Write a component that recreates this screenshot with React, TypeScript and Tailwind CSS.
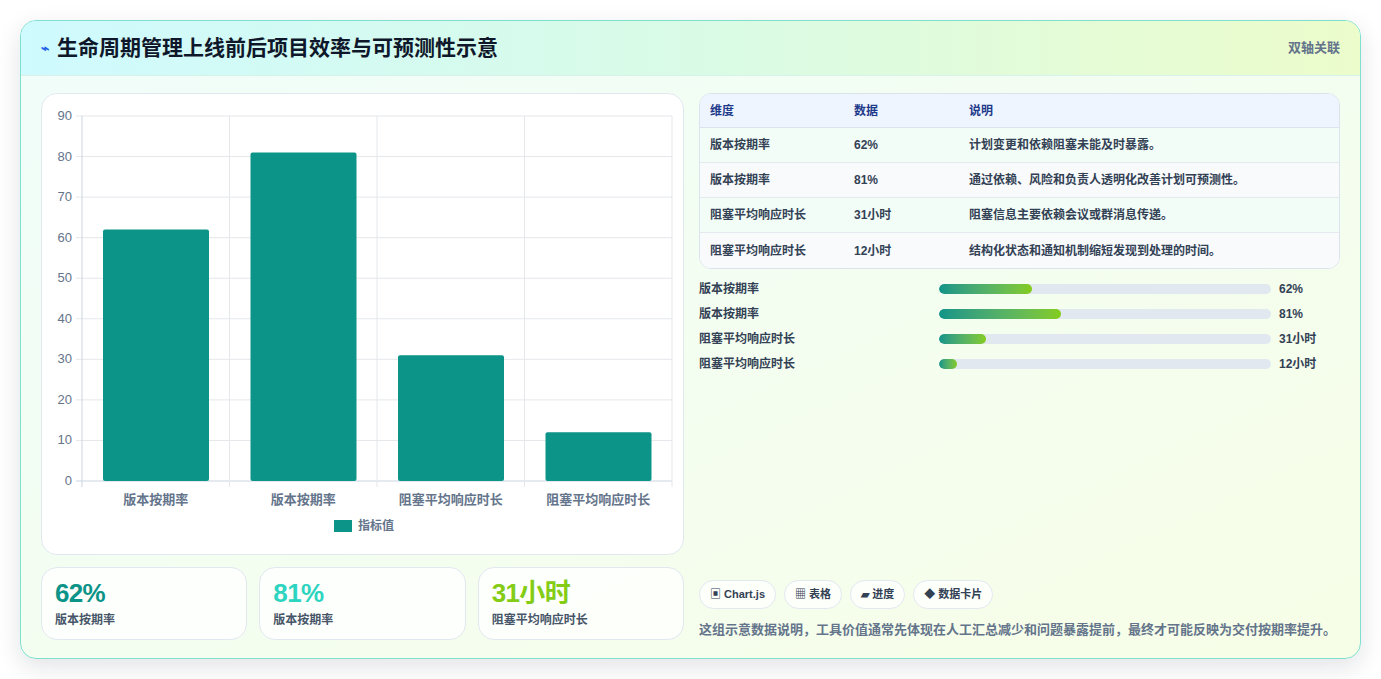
const font = { fontFamily: '"Liberation Sans", "Noto Sans CJK SC", sans-serif' };

const rows = [
  { name: "版本按期率", value: 62, unit: "%", note: "计划变更和依赖阻塞未能及时暴露。" },
  { name: "版本按期率", value: 81, unit: "%", note: "通过依赖、风险和负责人透明化改善计划可预测性。" },
  { name: "阻塞平均响应时长", value: 31, unit: "小时", note: "阻塞信息主要依赖会议或群消息传递。" },
  { name: "阻塞平均响应时长", value: 12, unit: "小时", note: "结构化状态和通知机制缩短发现到处理的时间。" },
];

const Chart = () => {
  const x0 = 40, x1 = 630, yTop = 22, yBot = 387;
  const h = (v: number) => ((yBot - yTop) * v) / 90;
  const cw = (x1 - x0) / 4;
  return (
    <svg width="643" height="461" className="block" style={font}>
      {[0, 10, 20, 30, 40, 50, 60, 70, 80, 90].map((t) => {
        const y = yBot - h(t);
        return (
          <g key={t}>
            <line x1={x0 - 6} x2={x1} y1={y} y2={y} stroke={t === 0 ? "#cbd5e1" : "#e5e7eb"} />
            <text x={30} y={y + 4} textAnchor="end" fontSize="13" fill="#64748b">{t}</text>
          </g>
        );
      })}
      {[0, 1, 2, 3, 4].map((i) => (
        <line key={i} x1={x0 + cw * i} x2={x0 + cw * i} y1={yTop} y2={yBot + 6} stroke={i === 0 ? "#cbd5e1" : "#e5e7eb"} />
      ))}
      {rows.map((r, i) => (
        <g key={i}>
          <rect x={x0 + cw * i + 21} y={yBot - h(r.value)} width={106} height={h(r.value)} rx="2" fill="#0d9488" />
          <text x={x0 + cw * i + cw / 2} y={410} textAnchor="middle" fontSize="13" fontWeight="700" fill="#64748b">{r.name}</text>
        </g>
      ))}
      <rect x={292} y={426} width={18} height={12} fill="#0d9488" />
      <text x={316} y={436} fontSize="12" fontWeight="700" fill="#64748b">指标值</text>
    </svg>
  );
};

export default function App() {
  return (
    <div className="min-h-screen bg-white p-5" style={font}>
      <div className="rounded-2xl border border-[#7fe0cf] overflow-hidden shadow-[0_8px_24px_rgba(15,23,42,0.12)] bg-gradient-to-br from-[#f0fdfa] to-[#f7fee7]">
        <div className="h-[55px] flex items-center justify-between px-5 border-b border-[#d7f2ea] bg-gradient-to-r from-[#cffafe] via-[#d9fbe6] to-[#ecfccb]">
          <div className="flex items-center gap-2">
            <span className="text-[#2563eb] text-sm font-bold">⌁</span>
            <span className="text-[21px] font-bold text-[#0f172a]">生命周期管理上线前后项目效率与可预测性示意</span>
          </div>
          <span className="text-[13px] font-bold text-[#64748b]">双轴关联</span>
        </div>
        <div className="flex gap-[15px] px-5 pt-[17px] pb-[18px]">
          <div className="w-[643px] flex flex-col gap-3">
            <div className="h-[462px] rounded-2xl bg-white border border-[#e2e8f0]">
              <Chart />
            </div>
            <div className="flex gap-3">
              {[
                { v: "62%", c: "#0d9488", l: "版本按期率" },
                { v: "81%", c: "#2dd4bf", l: "版本按期率" },
                { v: "31小时", c: "#84cc16", l: "阻塞平均响应时长" },
              ].map((s, i) => (
                <div key={i} className="flex-1 h-[73px] rounded-2xl bg-white/80 border border-[#e2e8f0] px-[13px] pt-[9px]">
                  <div className="text-[26px] font-bold leading-[32px] tracking-tight" style={{ color: s.c }}>{s.v}</div>
                  <div className="text-xs font-bold text-[#475569] mt-[3px]">{s.l}</div>
                </div>
              ))}
            </div>
          </div>
          <div className="flex-1 flex flex-col">
            <div className="rounded-xl border border-[#dbe3ee] overflow-hidden bg-white text-xs font-bold text-[#334155]">
              <div className="flex h-[34px] items-center bg-[#eef5ff] text-[#1e3a8a] border-b border-[#dbe3ee]">
                <div className="w-[154px] pl-[10px]">维度</div>
                <div className="w-[115px]">数据</div>
                <div>说明</div>
              </div>
              {rows.map((r, i) => (
                <div key={i} className={`flex h-[35px] items-center ${i % 2 ? "bg-[#f8fafc]" : "bg-[#f3fdf7]"} ${i < 3 ? "border-b border-[#e5eaf1]" : ""}`}>
                  <div className="w-[154px] pl-[10px]">{r.name}</div>
                  <div className="w-[115px]">{r.value}{r.unit}</div>
                  <div>{r.note}</div>
                </div>
              ))}
            </div>
            <div className="mt-[10px] flex flex-col gap-[6px] text-xs font-bold text-[#334155]">
              {rows.map((r, i) => (
                <div key={i} className="flex items-center h-[19px]">
                  <div className="w-[240px]">{r.name}</div>
                  <div className="w-[332px] h-[10px] rounded-full bg-[#e2e8f0] overflow-hidden">
                    <div className="h-full rounded-full bg-gradient-to-r from-[#0d9488] to-[#84cc16]" style={{ width: `${r.value * 1.5}px` }} />
                  </div>
                  <div className="ml-2">{r.value}{r.unit}</div>
                </div>
              ))}
            </div>
            <div className="mt-auto flex gap-2 text-[11px] font-bold text-[#334155]">
              {["▣ Chart.js", "▦ 表格", "▰ 进度", "◆ 数据卡片"].map((c) => (
                <span key={c} className="h-[29px] flex items-center px-[10px] rounded-full bg-white/80 border border-[#e2e8f0]">{c}</span>
              ))}
            </div>
            <p className="mt-[11px] text-[13px] font-bold text-[#64748b] leading-5">这组示意数据说明，工具价值通常先体现在人工汇总减少和问题暴露提前，最终才可能反映为交付按期率提升。</p>
          </div>
        </div>
      </div>
    </div>
  );
}
